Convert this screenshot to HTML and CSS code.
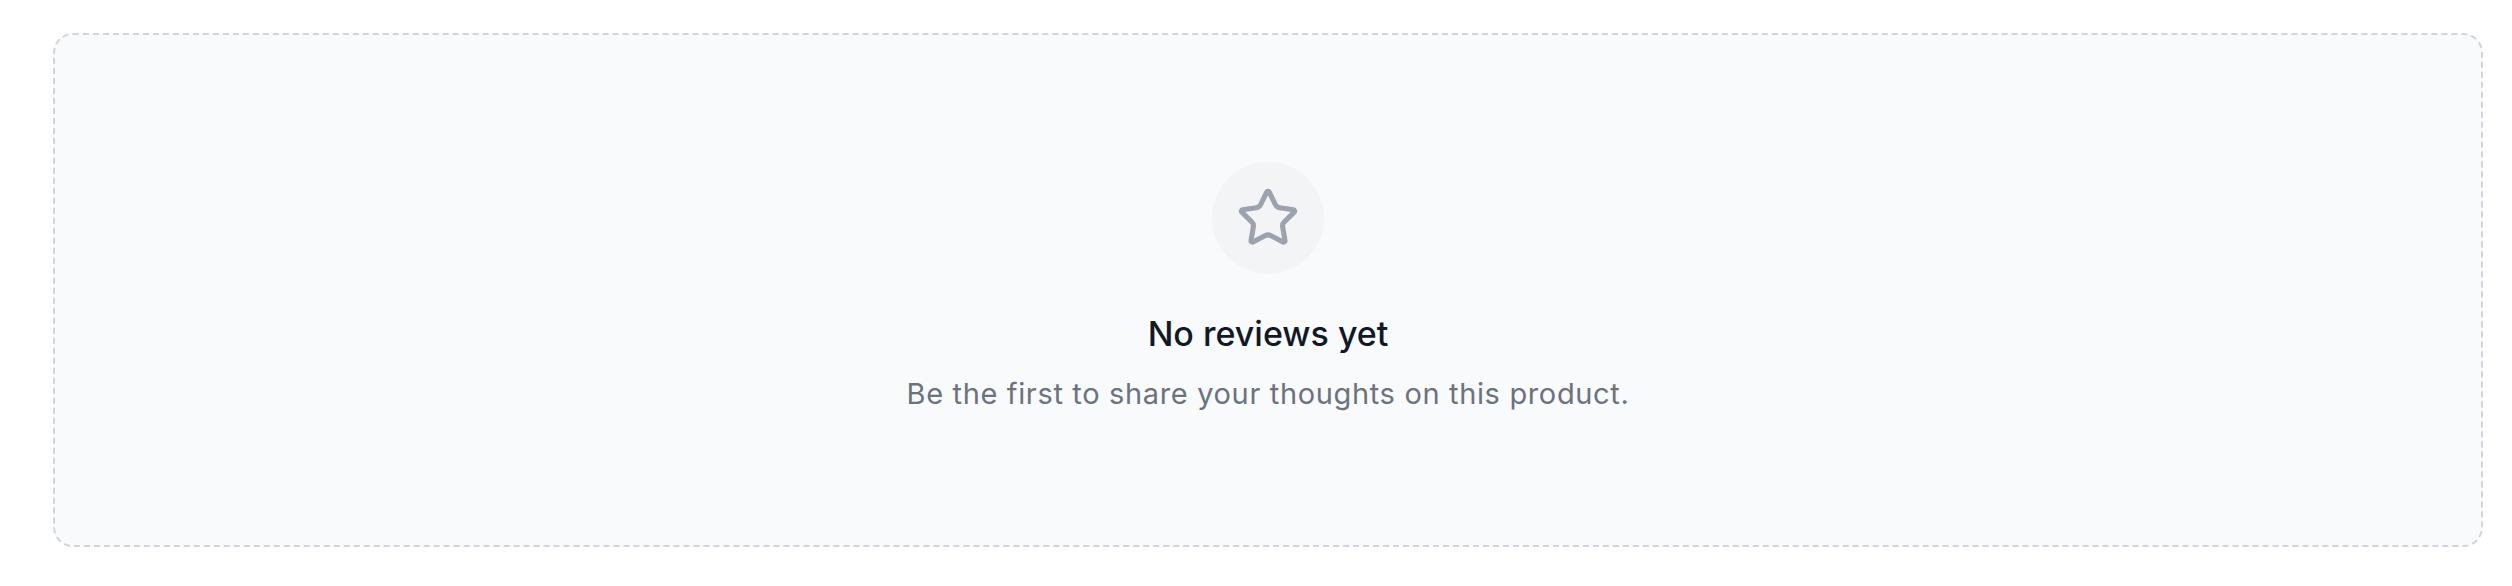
FILE: index.html
```html
<!DOCTYPE html>
<html lang="en">
<head>
<meta charset="utf-8">
<title>Reviews</title>
<link rel="stylesheet" href="styles.css">
</head>
<body>
<main class="page">
  <section class="empty-card">
    <div class="icon-circle">
      <svg class="star" viewBox="0 0 24 24" fill="none" stroke="currentColor" stroke-width="1.9" stroke-linecap="round" stroke-linejoin="round" aria-hidden="true">
        <path d="M11.525 2.295a.53.53 0 0 1 .95 0l2.31 4.679a2.123 2.123 0 0 0 1.595 1.16l5.166.756a.53.53 0 0 1 .294.904l-3.736 3.638a2.123 2.123 0 0 0-.611 1.878l.882 5.14a.53.53 0 0 1-.771.56l-4.618-2.428a2.122 2.122 0 0 0-1.973 0L6.396 21.01a.53.53 0 0 1-.77-.56l.881-5.139a2.122 2.122 0 0 0-.611-1.879L2.16 9.795a.53.53 0 0 1 .294-.906l5.165-.755a2.122 2.122 0 0 0 1.597-1.16z"/>
      </svg>
    </div>
    <h2 class="title">No reviews yet</h2>
    <p class="subtitle">Be the first to share your thoughts on this product.</p>
  </section>
</main>
</body>
</html>
```
FILE: styles.css
```css
html, body {
  margin: 0;
  padding: 0;
  background: #ffffff;
}

body {
  font-family: Inter, "Noto Sans", "Liberation Sans", sans-serif;
}

.page {
  padding: 33px 29px 39px 53px;
}

.empty-card {
  box-sizing: border-box;
  height: 514px;
  border: 2px dashed #d1d5db;
  border-radius: 20px;
  background: #f9fafb;
  display: flex;
  flex-direction: column;
  align-items: center;
  padding-top: 127px;
}

.icon-circle {
  width: 112px;
  height: 112px;
  border-radius: 50%;
  background: #f3f4f6;
  display: flex;
  align-items: center;
  justify-content: center;
}

.star {
  width: 64px;
  height: 64px;
  color: #9ca3af;
}

.title {
  margin: 39px 0 0;
  font-size: 34px;
  line-height: 42px;
  font-weight: 500;
  color: #111827;
}

.subtitle {
  margin: 19px 0 0;
  font-size: 29px;
  line-height: 40px;
  font-weight: 400;
  letter-spacing: 0.65px;
  color: #6b7280;
}
```
